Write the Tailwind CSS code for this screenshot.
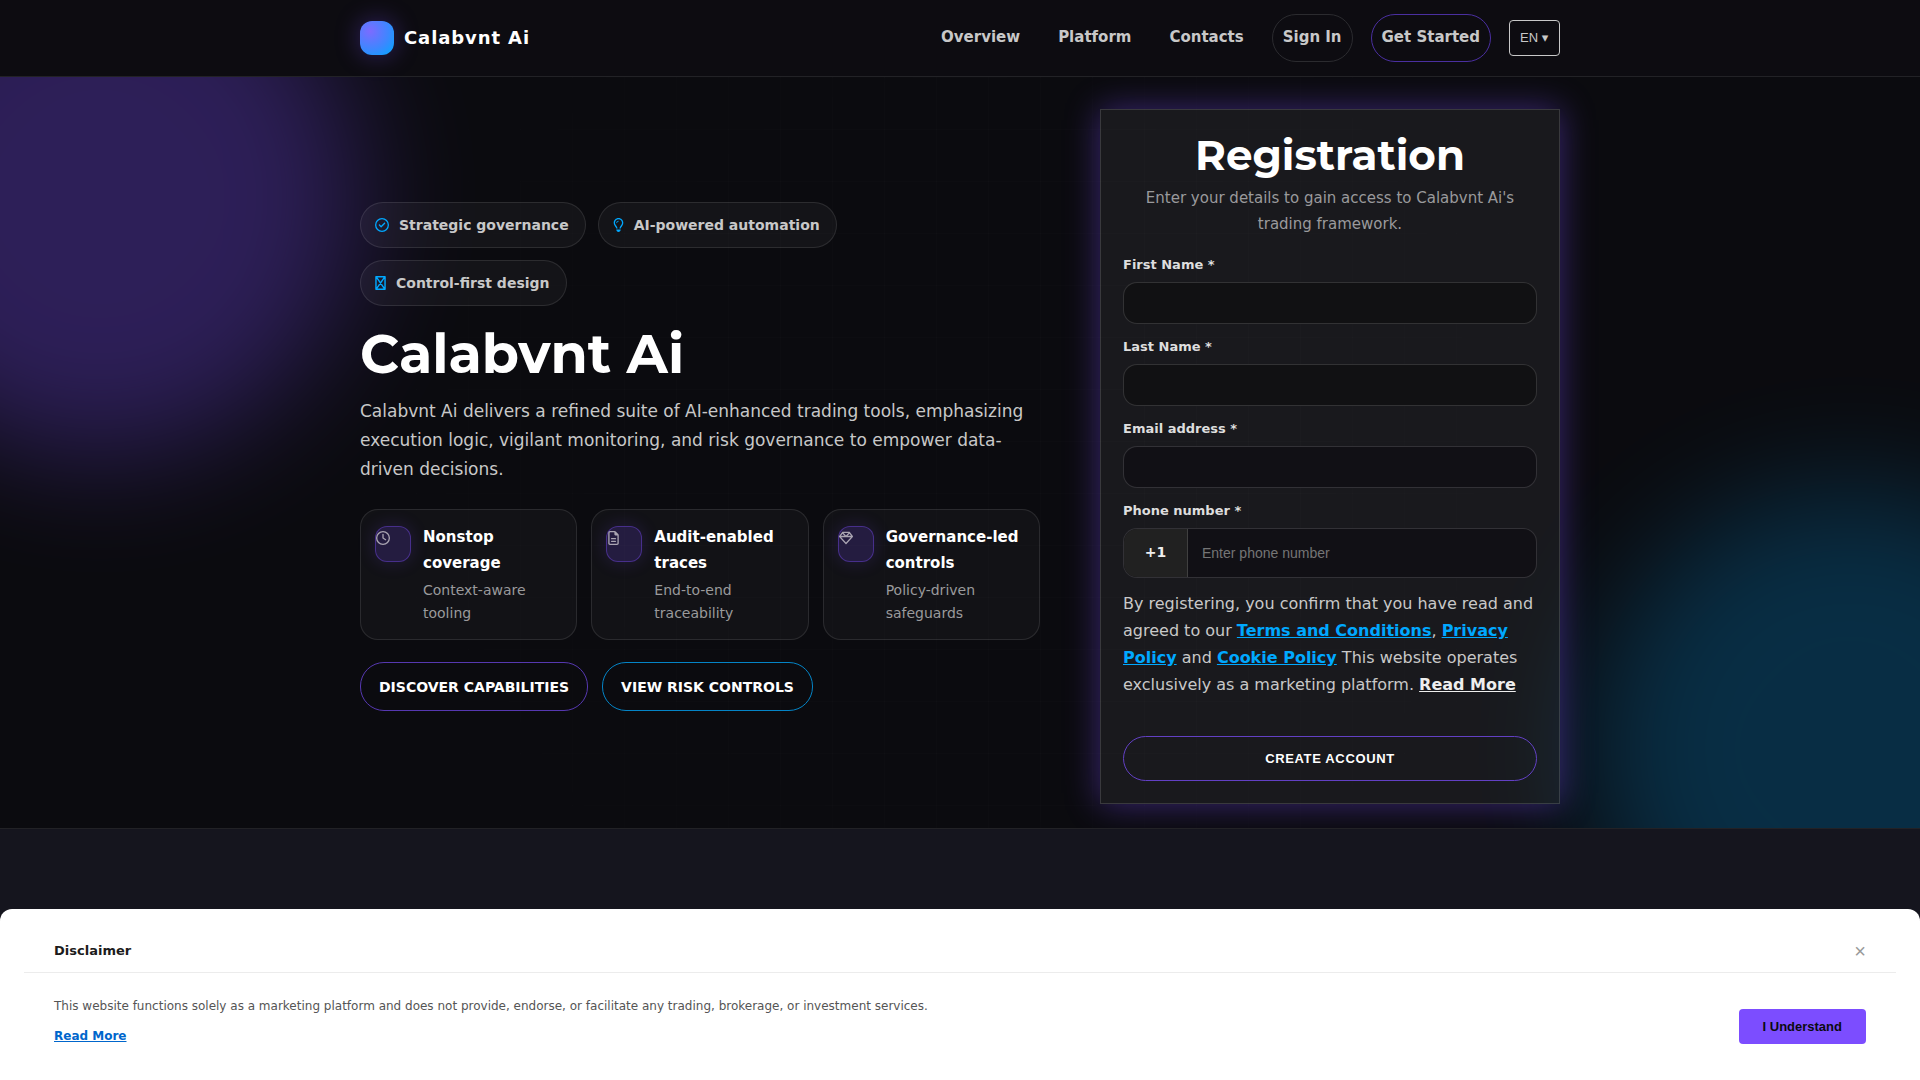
<!DOCTYPE html>
<html lang="en">
<head>
  <meta charset="UTF-8">
  <meta name="viewport" content="width=device-width, initial-scale=1.0">
  <title>Calabvnt Ai</title>
  <script src="https://cdn.jsdelivr.net/npm/@tailwindcss/browser@4"></script>
</head>
<body class="bg-[#15151e] min-h-screen font-['DejaVu_Sans',sans-serif] text-[#c8c8c8] overflow-x-hidden">

  <!-- Header -->
  <header class="relative z-10 bg-[#0d0c11] border-b border-[#222226]">
    <div class="max-w-[1200px] mx-auto py-[14px] flex items-center justify-between">
      <a href="#" class="flex items-center gap-[10px]">
        <span class="size-[34px] rounded-xl bg-[radial-gradient(circle_at_30%_30%,#7c6bff,#3d87ff_55%,#00a8ff)] shadow-[0_0_24px_rgba(124,77,255,0.35)]"></span>
        <span class="text-lg font-bold text-white tracking-wider">Calabvnt Ai</span>
      </a>
      <nav class="flex items-center gap-[18px] text-[15px] font-bold">
        <a href="#overview" class="px-[10px] pb-[2px]">Overview</a>
        <a href="#platform" class="px-[10px] pb-[2px]">Platform</a>
        <a href="#contacts" class="px-[10px] pb-[2px]">Contacts</a>
        <a href="#signin" class="h-12 px-[10px] pb-[2px] flex items-center rounded-3xl border border-[#2b2b2f]">Sign In</a>
        <a href="#register" class="h-12 px-[10px] pb-[2px] flex items-center rounded-3xl border border-[#4a2fa0]">Get Started</a>
        <select aria-label="Language" class="h-9 px-[10px] appearance-none rounded border border-[#c8c8c8] font-['Liberation_Sans','DejaVu_Sans',sans-serif] text-[13px] font-normal">
          <option>EN ▾</option>
        </select>
      </nav>
    </div>
  </header>

  <!-- Hero -->
  <section class="relative overflow-hidden bg-[#0b0b0f] border-b border-[#222226]">
    <!-- glows and grid -->
    <div class="absolute -left-40 -top-[140px] size-[520px] rounded-full bg-[#7c4dff] opacity-30 blur-[60px]"></div>
    <div class="absolute -right-[190px] -bottom-[180px] size-[520px] rounded-full bg-[#00a8ff] opacity-22 blur-[60px]"></div>
    <div class="absolute inset-0 bg-[linear-gradient(rgba(255,255,255,0.012)_1px,transparent_1px),linear-gradient(90deg,rgba(255,255,255,0.012)_1px,transparent_1px)] bg-[size:52px_52px] mask-[radial-gradient(circle,#000_30%,transparent_70%)]"></div>

    <div class="relative max-w-[1200px] mx-auto pt-8 pb-6 grid grid-cols-[1fr_460px] gap-[60px] items-center">
      <div>
        <!-- Chips -->
        <div class="flex flex-wrap gap-3 text-sm font-bold mb-[17px]">
          <span class="h-[46px] pl-[14px] pr-4 flex items-center gap-[10px] rounded-3xl border border-white/10 bg-white/4">
            <svg class="size-[14px] fill-[#00a8ff]" viewBox="0 0 512 512"><path d="M256 48a208 208 0 1 1 0 416 208 208 0 1 1 0-416zm0 464A256 256 0 1 0 256 0a256 256 0 1 0 0 512zM369 209c9.4-9.4 9.4-24.6 0-33.9s-24.6-9.4-33.9 0l-111 111-47-47c-9.4-9.4-24.6-9.4-33.9 0s-9.4 24.6 0 33.9l64 64c9.4 9.4 24.6 9.4 33.9 0L369 209z"/></svg>
            Strategic governance
          </span>
          <span class="h-[46px] pl-[14px] pr-4 flex items-center gap-[10px] rounded-3xl border border-white/10 bg-white/4">
            <svg class="h-[14px] w-[11px] fill-[#00a8ff]" viewBox="0 0 384 512"><path d="M297.2 248.9C311.6 228.3 320 203.2 320 176c0-70.7-57.3-128-128-128S64 105.3 64 176c0 27.2 8.4 52.3 22.8 72.9c3.7 5.3 8.1 11.3 12.8 17.7c12.9 17.7 28.3 38.9 39.8 59.8c10.4 19 15.7 38.8 18.3 57.5H109c-2.2-12-5.9-23.7-11.8-34.5c-9.9-18-22.2-34.9-34.5-51.8c-5.2-7.1-10.4-14.2-15.4-21.4C27.6 247.9 16 213.3 16 176C16 78.8 94.8 0 192 0s176 78.8 176 176c0 37.3-11.6 71.9-31.4 100.3c-5 7.2-10.2 14.3-15.4 21.4c-12.3 16.8-24.6 33.7-34.5 51.8c-5.9 10.8-9.6 22.5-11.8 34.5H226.4c2.6-18.7 7.9-38.6 18.3-57.5c11.5-20.9 26.9-42.1 39.8-59.8c4.7-6.4 9-12.4 12.7-17.7zM192 128c-26.5 0-48 21.5-48 48c0 8.8-7.2 16-16 16s-16-7.2-16-16c0-44.2 35.8-80 80-80c8.8 0 16 7.2 16 16s-7.2 16-16 16zm0 384c-44.2 0-80-35.8-80-80V416H272v16c0 44.2-35.8 80-80 80z"/></svg>
            AI-powered automation
          </span>
          <span class="h-[46px] pl-[14px] pr-4 flex items-center gap-[10px] rounded-3xl border border-white/10 bg-white/4">
            <svg class="h-[14px] w-[11px] fill-none stroke-[#00a8ff]" viewBox="0 0 384 512" stroke-width="52" stroke-linejoin="round"><path d="M26 26H358V486H26zM36 30L348 482M348 30L36 482"/></svg>
            Control-first design
          </span>
        </div>

        <h1 class="font-['Montserrat','DejaVu_Sans',sans-serif] text-[54px] leading-[62px] font-bold text-white">Calabvnt Ai</h1>
        <p class="mt-3 text-[17px] leading-[29px]">Calabvnt Ai delivers a refined suite of AI-enhanced trading tools, emphasizing execution logic, vigilant monitoring, and risk governance to empower data-driven decisions.</p>

        <!-- Features -->
        <div class="mt-[25px] grid grid-cols-3 gap-[14px]">
          <div class="rounded-[18px] border border-white/10 bg-white/3 p-[14px] flex gap-3">
            <div class="mt-[2px] size-9 shrink-0 rounded-xl border border-[#7c4dff]/40 bg-[#7c4dff]/18 shadow-[0_0_18px_rgba(124,77,255,0.18)]">
              <svg class="mt-1 size-[14px] fill-[#aaa5b2]" viewBox="0 0 512 512"><path d="M464 256A208 208 0 1 1 48 256a208 208 0 1 1 416 0zM0 256a256 256 0 1 0 512 0A256 256 0 1 0 0 256zM232 120V256c0 8 4 15.5 10.7 20l96 64c11 7.4 25.9 4.4 33.3-6.7s4.4-25.9-6.7-33.3L280 243.2V120c0-13.3-10.7-24-24-24s-24 10.7-24 24z"/></svg>
            </div>
            <div>
              <h3 class="text-[15px] leading-[26px] font-bold text-white">Nonstop coverage</h3>
              <p class="mt-[3px] text-[14px] leading-[23px] text-[#9a9a9c]">Context-aware tooling</p>
            </div>
          </div>
          <div class="rounded-[18px] border border-white/10 bg-white/3 p-[14px] flex gap-3">
            <div class="mt-[2px] size-9 shrink-0 rounded-xl border border-[#7c4dff]/40 bg-[#7c4dff]/18 shadow-[0_0_18px_rgba(124,77,255,0.18)]">
              <svg class="mt-1 ml-px h-[14px] w-[11px] fill-[#aaa5b2]" viewBox="0 0 384 512"><path d="M64 464c-8.8 0-16-7.2-16-16V64c0-8.8 7.2-16 16-16H224v80c0 17.7 14.3 32 32 32h80V448c0 8.8-7.2 16-16 16H64zM64 0C28.7 0 0 28.7 0 64V448c0 35.3 28.7 64 64 64H320c35.3 0 64-28.7 64-64V154.5c0-17-6.7-33.3-18.7-45.3L274.7 18.7C262.7 6.7 246.5 0 229.5 0H64zm56 256c-13.3 0-24 10.7-24 24s10.7 24 24 24H264c13.3 0 24-10.7 24-24s-10.7-24-24-24H120zm0 96c-13.3 0-24 10.7-24 24s10.7 24 24 24H264c13.3 0 24-10.7 24-24s-10.7-24-24-24H120z"/></svg>
            </div>
            <div>
              <h3 class="text-[15px] leading-[26px] font-bold text-white">Audit-enabled traces</h3>
              <p class="mt-[3px] text-[14px] leading-[23px] text-[#9a9a9c]">End-to-end traceability</p>
            </div>
          </div>
          <div class="rounded-[18px] border border-white/10 bg-white/3 p-[14px] flex gap-3">
            <div class="mt-[2px] size-9 shrink-0 rounded-xl border border-[#7c4dff]/40 bg-[#7c4dff]/18 shadow-[0_0_18px_rgba(124,77,255,0.18)]">
              <svg class="mt-1 size-[14px] fill-[#aaa5b2]" viewBox="0 0 512 512"><path d="M168.5 72L256 165l87.5-93h-175zM383.9 99.1L311.5 176h129L383.9 99.1zm50 124.9H256 78.1L256 420.3 433.9 224zM71.5 176h129L128.1 99.1 71.5 176zm434.3 40.1l-232 256c-4.5 5-11 7.9-17.8 7.9s-13.2-2.9-17.8-7.9l-232-256c-7.7-8.5-8.3-21.2-1.5-30.4l112-152c4.5-6.1 11.7-9.8 19.3-9.8H376c7.6 0 14.8 3.6 19.3 9.8l112 152c6.8 9.2 6.1 21.9-1.5 30.4z"/></svg>
            </div>
            <div>
              <h3 class="text-[15px] leading-[26px] font-bold text-white">Governance-led controls</h3>
              <p class="mt-[3px] text-[14px] leading-[23px] text-[#9a9a9c]">Policy-driven safeguards</p>
            </div>
          </div>
        </div>

        <div class="mt-[22px] flex gap-[14px] text-sm font-bold uppercase text-white">
          <a href="#capabilities" class="h-[49px] px-[18px] flex items-center rounded-3xl border border-[#5638b0]">Discover capabilities</a>
          <a href="#risk" class="h-[49px] px-[18px] flex items-center rounded-3xl border border-[#0484c6]">View risk controls</a>
        </div>
      </div>

      <!-- Registration -->
      <form class="border border-white/14 bg-white/6 shadow-[0_0_32px_rgba(124,77,255,0.42)] p-[22px]">
        <h2 class="text-center font-['Montserrat','DejaVu_Sans',sans-serif] text-[42px] leading-[46px] font-bold text-white">Registration</h2>
        <p class="mt-[7px] text-center text-[15px] leading-[26px] text-[#9a9a9c]">Enter your details to gain access to Calabvnt Ai's trading framework.</p>

        <div class="mt-[17px] flex flex-col gap-3">
          <div class="flex flex-col gap-[6px]">
            <label for="first" class="text-[13px] leading-[22px] font-bold text-[#dedede]">First Name *</label>
            <input id="first" type="text" class="h-[42px] w-full px-[14px] rounded-[14px] border border-white/14 bg-[#111113]">
          </div>
          <div class="flex flex-col gap-[6px]">
            <label for="last" class="text-[13px] leading-[22px] font-bold text-[#dedede]">Last Name *</label>
            <input id="last" type="text" class="h-[42px] w-full px-[14px] rounded-[14px] border border-white/14 bg-[#111113]">
          </div>
          <div class="flex flex-col gap-[6px]">
            <label for="email" class="text-[13px] leading-[22px] font-bold text-[#dedede]">Email address *</label>
            <input id="email" type="email" class="h-[42px] w-full px-[14px] rounded-[14px] border border-white/14 bg-[#111015]">
          </div>
          <div class="flex flex-col gap-[6px]">
            <label for="phone" class="text-[13px] leading-[22px] font-bold text-[#dedede]">Phone number *</label>
            <div class="h-[50px] flex rounded-[14px] border border-white/14 bg-[#111015] overflow-hidden">
              <span class="w-16 pb-[2px] flex items-center justify-center border-r border-white/14 bg-[#212121] text-sm font-bold text-[#eee]">+1</span>
              <input id="phone" type="tel" placeholder="Enter phone number" class="flex-1 px-[14px] font-['Liberation_Sans',sans-serif] text-sm placeholder:text-[#757575]">
            </div>
          </div>
        </div>

        <p class="mt-3 text-base leading-[27px]">By registering, you confirm that you have read and agreed to our <a href="#terms" class="font-bold underline text-[#00a8ff]">Terms and Conditions</a>, <a href="#privacy" class="font-bold underline text-[#00a8ff]">Privacy Policy</a> and <a href="#cookies" class="font-bold underline text-[#00a8ff]">Cookie Policy</a> This website operates exclusively as a marketing platform. <a href="#more" class="font-bold underline text-[#eee]">Read More</a></p>

        <button type="submit" class="mt-[38px] h-[45px] w-full rounded-full border border-[#6240c4] font-['Liberation_Sans',sans-serif] text-[13px] font-bold uppercase tracking-wider text-white">Create account</button>
      </form>
    </div>
  </section>

  <!-- Disclaimer -->
  <aside class="fixed inset-x-0 bottom-0 z-20 bg-white rounded-t-xl px-6 pt-8 pb-[34px]">
    <div class="flex items-center justify-between px-[30px] pb-[11px] border-b border-[#ececec]">
      <h4 class="text-[13px] leading-5 font-bold text-[#1c1c1c]">Disclaimer</h4>
      <button type="button" aria-label="Close" class="font-['Liberation_Sans',sans-serif] text-xl leading-5 text-[#999]">×</button>
    </div>
    <div class="flex items-end justify-between px-[30px] pt-[23px]">
      <div class="text-xs leading-5 text-[#555]">
        <p>This website functions solely as a marketing platform and does not provide, endorse, or facilitate any trading, brokerage, or investment services.</p>
        <a href="#disclaimer" class="mt-[10px] inline-block font-bold underline text-[#0066cc]">Read More</a>
      </div>
      <button type="button" class="mb-[2px] h-[35px] px-6 rounded bg-[#7c4dff] font-['Liberation_Sans',sans-serif] text-[13px] font-bold text-[#0b0b0f]">I Understand</button>
    </div>
  </aside>
</body>
</html>
